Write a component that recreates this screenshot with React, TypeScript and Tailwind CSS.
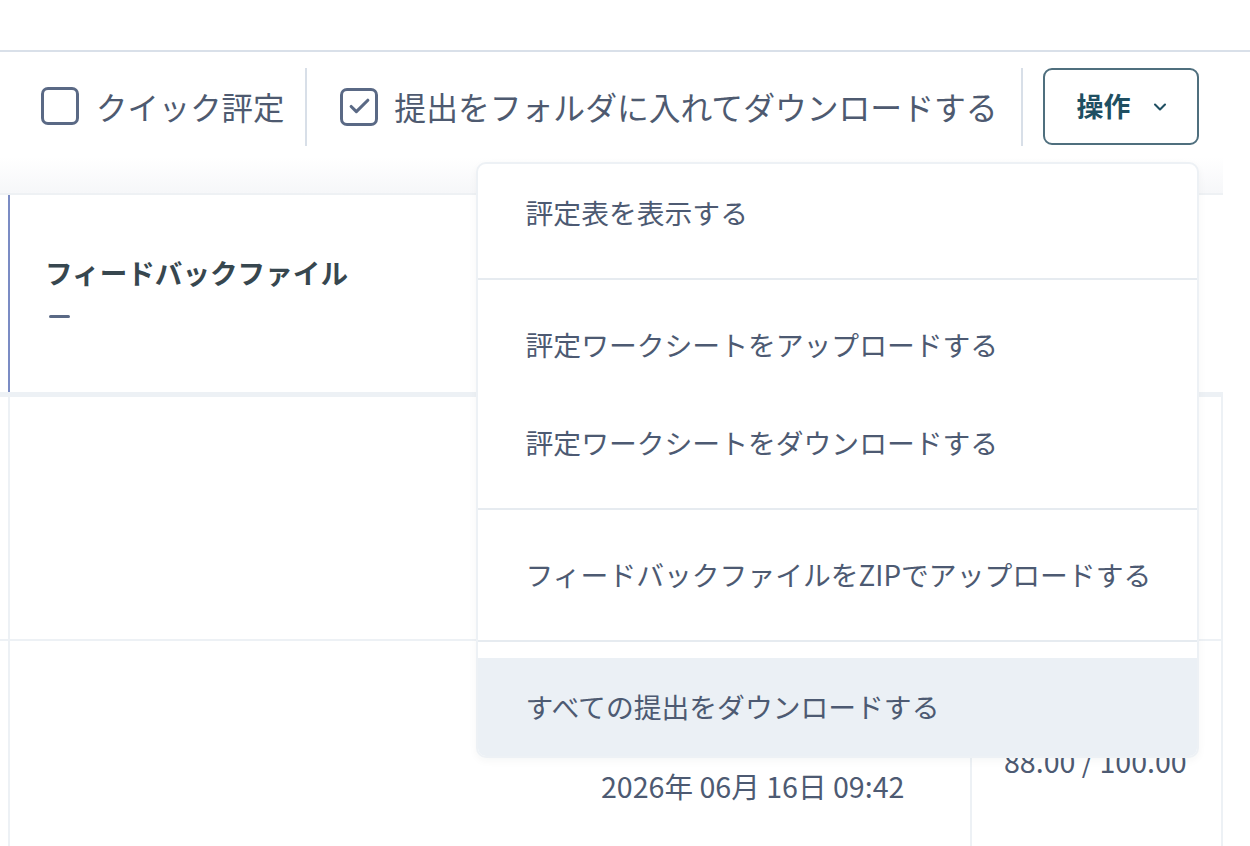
import React from "react";
import { Check, ChevronDown } from "lucide-react";

const FONT = "font-['Noto_Sans_CJK_JP','Noto_Sans',sans-serif]";

function Box({ checked }: { checked?: boolean }) {
  return (
    <span className="flex h-[38px] w-[38px] shrink-0 items-center justify-center rounded-[7px] border-[3px] border-[#5a6985] bg-white">
      {checked && <Check className="h-[25px] w-[25px] text-[#5a6985]" strokeWidth={3} />}
    </span>
  );
}

const sections: string[][] = [
  ["評定表を表示する"],
  ["評定ワークシートをアップロードする", "評定ワークシートをダウンロードする"],
  ["フィードバックファイルをZIPでアップロードする"],
  ["すべての提出をダウンロードする"],
];

function Menu() {
  return (
    <div className="absolute right-0 top-[calc(100%+17px)] z-10 w-[723px] overflow-hidden rounded-[10px] border-2 border-[#edf1f5] bg-white shadow-[0_3px_8px_rgba(30,41,59,0.04)]">
      {sections.map((items, si) => (
        <div
          key={si}
          className={`py-4 first:pt-0 last:pb-0 ${si > 0 ? "border-t-2 border-[#e6ebf0]" : ""}`}
        >
          {items.map((label) => {
            const active = label === "すべての提出をダウンロードする";
            return (
              <div
                key={label}
                className={`flex h-[98px] items-center pl-[48px] text-[27.8px] text-[#4d5a72] ${active ? "bg-[#ebf0f5]" : ""}`}
              >
                {label}
              </div>
            );
          })}
        </div>
      ))}
    </div>
  );
}

export default function App() {
  return (
    <div className={`relative h-[846px] w-[1250px] overflow-hidden bg-white ${FONT}`}>
      <div className="h-[52px] border-b-2 border-[#d9e0e9]" />

      <div className="flex h-[105px] items-center pl-[41px] pt-[4px]">
        <label className="flex items-center gap-[17px]">
          <Box />
          <span className="text-[31.4px] text-[#4e5a70]">クイック評定</span>
        </label>
        <div className="ml-[21px] mr-[33px] h-[78px] w-[2px] bg-[#d8dfe8]" />
        <label className="flex items-center gap-[16px]">
          <Box checked />
          <span className="text-[31.8px] text-[#4e5a70]">提出をフォルダに入れてダウンロードする</span>
        </label>
        <div className="ml-[23px] mr-[20px] h-[78px] w-[2px] bg-[#d8dfe8]" />
        <div className="relative">
          <button className="flex h-[77px] w-[156px] items-center rounded-[9px] border-2 border-[#4f6f7e] pl-[32px] text-[27px] font-bold text-[#1f4f62]">
            操作
            <ChevronDown className="ml-[19px] h-[20px] w-[20px]" strokeWidth={2.5} />
          </button>
          <Menu />
        </div>
      </div>

      <div className="w-[1223px]">
        <div className="h-[38px] border-b-2 border-[#eef1f4] bg-gradient-to-b from-white to-[#f6f7f9]" />

        {/* header row */}
        <div className="flex h-[202px] border-b-[5px] border-[#edf1f5]">
          <div className="w-[8px]" />
          <div className="flex w-[465px] flex-col justify-center border-l-2 border-[#7b8cc4] pb-[10px] pl-[35px]">
            <span className="text-[27.6px] font-bold leading-none text-[#37474f]">フィードバックファイル</span>
            <span className="ml-[4px] mt-[28px] h-[3px] w-[21px] rounded-full bg-[#5a6985]" />
          </div>
          <div className="flex-1" />
        </div>

        {/* row 1 */}
        <div className="flex h-[244px] border-b-2 border-[#edf1f5]">
          <div className="w-[8px]" />
          <div className="w-[962px] border-l-2 border-[#edf1f5]" />
          <div className="flex-1 border-x-2 border-[#edf1f5]" />
        </div>

        {/* row 2 */}
        <div className="flex h-[210px]">
          <div className="w-[8px]" />
          <div className="w-[465px] border-l-2 border-[#edf1f5]" />
          <div className="w-[497px] pl-[128px] pt-[125px] text-[28.6px] leading-[40px] text-[#4d5a72]">
            2026年 06月 16日 09:42
          </div>
          <div className="flex-1 border-x-2 border-[#edf1f5] pl-[32px] pt-[100px] text-[28.6px] leading-[40px] text-[#4d5a72]">
            88.00 / 100.00
          </div>
        </div>
      </div>
    </div>
  );
}
